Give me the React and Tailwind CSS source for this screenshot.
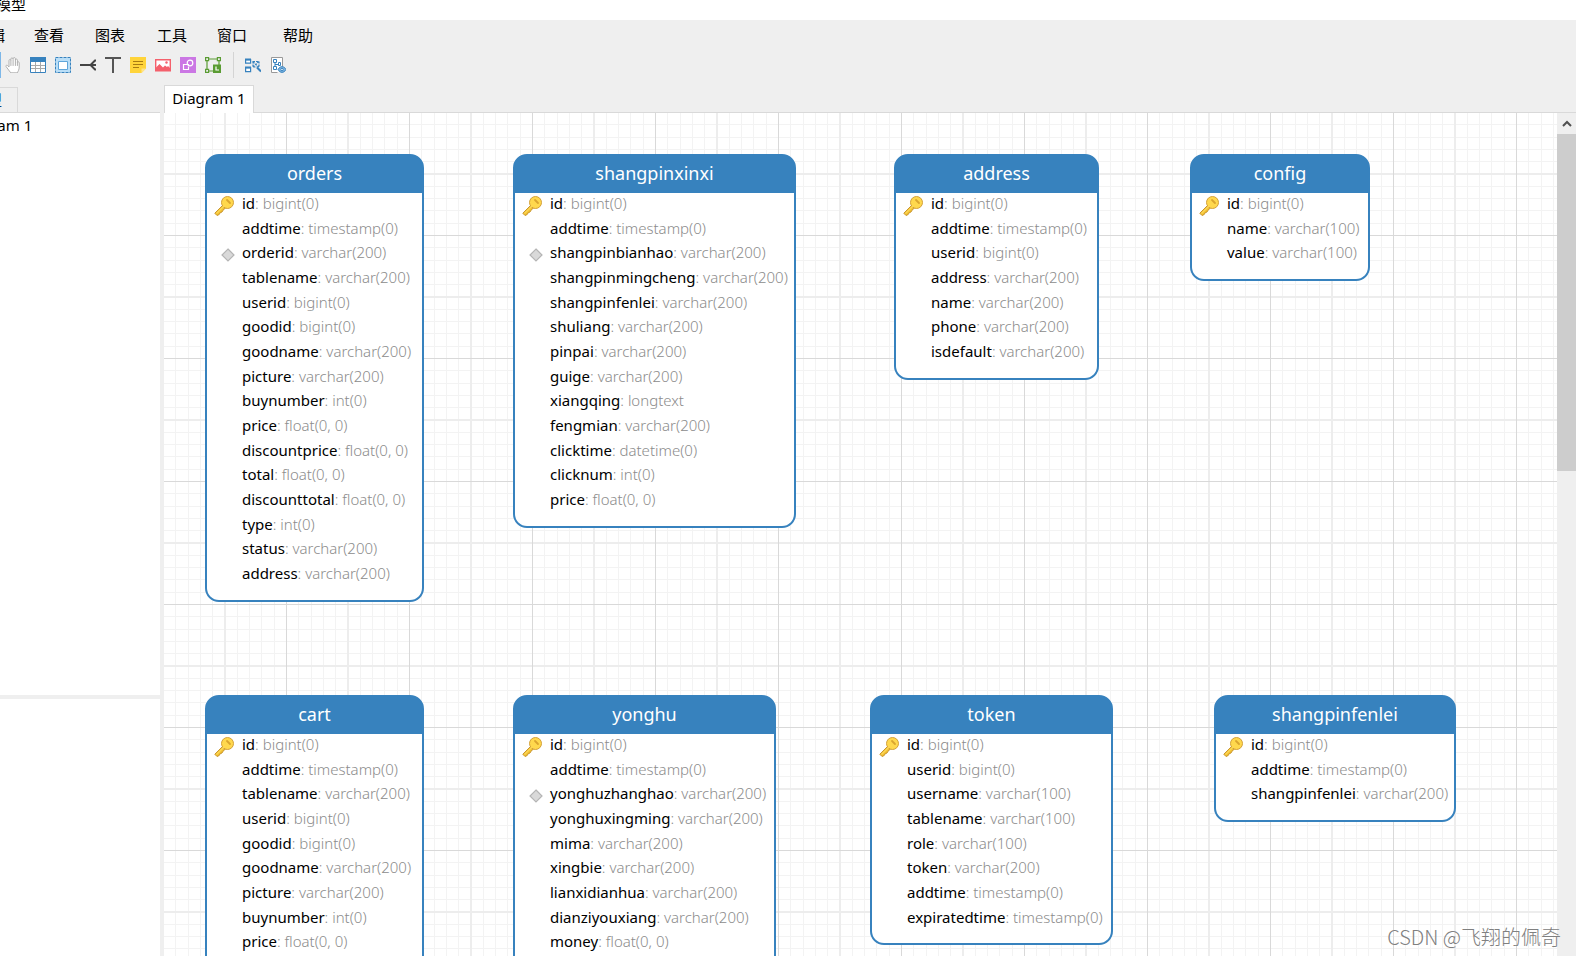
const C = 'bigint(0)', V = 'varchar(200)', W = 'varchar(100)', T = 'timestamp(0)', F = 'float(0, 0)', I = 'int(0)';

const tables = [
  { name: 'orders', x: 41, y: 41, w: 219, unique: 'orderid', cols: [['id', C], ['addtime', T], ['orderid', V], ['tablename', V], ['userid', C], ['goodid', C], ['goodname', V], ['picture', V], ['buynumber', I], ['price', F], ['discountprice', F], ['total', F], ['discounttotal', F], ['type', I], ['status', V], ['address', V]] },
  { name: 'shangpinxinxi', x: 349, y: 41, w: 283, unique: 'shangpinbianhao', cols: [['id', C], ['addtime', T], ['shangpinbianhao', V], ['shangpinmingcheng', V], ['shangpinfenlei', V], ['shuliang', V], ['pinpai', V], ['guige', V], ['xiangqing', 'longtext'], ['fengmian', V], ['clicktime', 'datetime(0)'], ['clicknum', I], ['price', F]] },
  { name: 'address', x: 730, y: 41, w: 205, cols: [['id', C], ['addtime', T], ['userid', C], ['address', V], ['name', V], ['phone', V], ['isdefault', V]] },
  { name: 'config', x: 1026, y: 41, w: 180, cols: [['id', C], ['name', W], ['value', W]] },
  { name: 'cart', x: 41, y: 582, w: 219, cols: [['id', C], ['addtime', T], ['tablename', V], ['userid', C], ['goodid', C], ['goodname', V], ['picture', V], ['buynumber', I], ['price', F]] },
  { name: 'yonghu', x: 349, y: 582, w: 263, unique: 'yonghuzhanghao', cols: [['id', C], ['addtime', T], ['yonghuzhanghao', V], ['yonghuxingming', V], ['mima', V], ['xingbie', V], ['lianxidianhua', V], ['dianziyouxiang', V], ['money', F]] },
  { name: 'token', x: 706, y: 582, w: 243, cols: [['id', C], ['userid', C], ['username', W], ['tablename', W], ['role', W], ['token', V], ['addtime', T], ['expiratedtime', T]] },
  { name: 'shangpinfenlei', x: 1050, y: 582, w: 242, cols: [['id', C], ['addtime', T], ['shangpinfenlei', V]] },
];

function KeyIcon() {
  return (
    <svg width="20" height="20" viewBox="0 0 20 20" aria-hidden="true">
      <path d="M8.500 9.500.8 17.200 3 19.500l2.200-1 1-1.800 1.800-.7 1-1.800 3-2.700z" fill="#f3c02f" stroke="#c9962e" />
      <circle cx="13.500" cy="6.500" r="6" fill="#ffd84d" stroke="#d3a039" />
      <path d="m2.500 17.500 7.500-7.500" stroke="#fbd75a" strokeWidth="1.200" />
      <path d="m13 4 3 3" stroke="#dba52f" strokeWidth="1.800" strokeLinecap="round" />
    </svg>
  );
}

function UniqueIcon() {
  return (
    <svg width="14" height="14" viewBox="0 0 14 14" aria-hidden="true">
      <path d="m7 1 6 6-6 6-6-6z" fill="#d9d9d9" stroke="#b5b5b5" strokeWidth="1.200" />
    </svg>
  );
}

function Entity({ table }) {
  return (
    <section
      className="absolute rounded-[14px] border-2 border-[#3782be] bg-[#3782be]"
      style={{ left: table.x, top: table.y, width: table.w }}
    >
      <h2 className="flex h-[37px] items-center justify-center pb-0.5 text-[18px] text-white">{table.name}</h2>
      <ul className="rounded-b-[12px] bg-white pb-3">
        {table.cols.map(([name, type], i) => (
          <li
            key={name}
            className={`flex items-center whitespace-nowrap pb-1 text-[15px] ${i % 3 === 1 ? 'h-[24px]' : 'h-[25px]'}`}
          >
            <span className="flex w-[35px] shrink-0 items-center justify-center pr-0.5 pt-1">
              {i === 0 && <KeyIcon />}
              {name === table.unique && <span className="pl-2"><UniqueIcon /></span>}
            </span>
            <span>{name}</span>
            <span className="whitespace-pre font-light text-[#8c8c8c]">: {type}</span>
          </li>
        ))}
      </ul>
    </section>
  );
}

const minor = [12, 25, 37, 49, 74, 86, 98, 111];

function Grid() {
  return (
    <svg className="absolute inset-0 size-full" aria-hidden="true">
      <defs>
        <pattern id="grid" x="-1" y="-1" width="123" height="123" patternUnits="userSpaceOnUse" shapeRendering="crispEdges">
          {minor.map((p) => (
            <path key={p} d={`M${p} 0h1v123h-1zM0 ${p}h123v1H0z`} fill="#f3f3f3" />
          ))}
          <path d="M61 0h2v123h-2zM0 61h123v2H0z" fill="#ededed" />
          <path d="M0 0h1v123H0zM0 0h123v1H0z" fill="#d9d9d9" />
        </pattern>
      </defs>
      <rect width="100%" height="100%" fill="url(#grid)" />
    </svg>
  );
}

const tools = [
  ['Hand', <g key="i" strokeLinejoin="round" strokeLinecap="round"><path d="M5.500 15.500 1 9.500c-.4-1.300 1-1.800 2-.5l1 1V3.500c0-1.300 1.800-1.300 1.900 0V2c0-1.500 2.100-1.500 2.200 0v-.3c.1-1.500 2.200-1.500 2.300 0V3c.2-1.300 2-1.200 2 .1v2.400c.3-1 1.800-.9 1.800.3V10c0 3-1.200 4-1.700 5.500z" fill="#fff" stroke="#b0b0b0" /><path d="M5.900 4v4.500M8.100 2.500v6M10.400 3v5.500M12.400 5.500v3" fill="none" stroke="#b0b0b0" /></g>],
  ['Table', <g key="i"><path d="M.5.5h15v15H.5z" fill="#fff" stroke="#3782be" /><path d="M0 0h16v5H0z" fill="#3782be" /><path d="M5.500 5v10M10.500 5v10M1 8.500h14M1 11.500h14" stroke="#a9a9a9" /></g>],
  ['Layer', <g key="i"><path d="M.5.5h15v15H.5z" fill="#b9def7" stroke="#3782be" strokeDasharray="3 1" /><path d="M3.500 4.500h9v8h-9z" fill="#fff" stroke="#5fa5da" /></g>],
  ['Relation', <path key="i" d="M0 8h16M16 3.500h-1L10.500 8l4.500 4.500h1" fill="none" stroke="#444" strokeWidth="2" />],
  ['Label', <path key="i" d="M0 1h16M8 1v15" stroke="#555" strokeWidth="2" />],
  ['Note', <g key="i"><path d="M0 0h16v11.500L11.500 16H0z" fill="#ffd43a" /><path d="M16 11.500h-4.500V16z" fill="#ffe48a" /><path d="M3 4.500h10M3 7.500h10M3 10.500h6" stroke="#a87b12" /></g>],
  ['Image', <g key="i"><path d="M.7 2.700h14.600v11H.7z" fill="#fff" stroke="#f4606c" strokeWidth="1.400" /><path d="M1 10.500 4.500 7 8 10.500l2-2 2 1.500 1-1 2 2V14H1z" fill="#f4606c" /><circle cx="11.500" cy="5.500" r="1.200" fill="#f4606c" /></g>],
  ['Shape', <g key="i"><path d="M0 0h16v16H0z" fill="#cb77e4" /><g fill="none" stroke="#fff" strokeWidth="1.200"><path d="M7 7.500H3.500v5h5v-3" /><circle cx="10" cy="6" r="2.800" /><path d="M7 7.500h1.500V9" /></g></g>],
  ['Layout', <g key="i" fill="none" stroke="#5a9c33" strokeWidth="1.200"><path d="M2 2v12h6M2 2h12v6" /><path d="M.6.6h3v3h-3zM12.400.6h3v3h-3zM.6 12.400h3v3h-3z" fill="#efefef" /><path d="M8 7.500h8V16H8z" fill="#5a9c33" stroke="none" /><path d="M11 9.500V13h3" stroke="#fff" /></g>],
];

const viewTools = [
  ['Auto layout', <g key="i" fill="none" stroke="#3782be" strokeWidth="1.200"><path d="M.6 2.600h5v3.500h-5zM.6 10.600h5v4h-5z" fill="#fff" /><path d="M0 2.500h6M0 10.500h6" strokeWidth="2" /><path d="M8 4.500h6v5.500H8zM8 10l6-6M8 5l6 5" strokeDasharray="2 1" /><path d="m12 10.500 4 4" strokeWidth="2" /></g>],
  ['Preview', <g key="i" fill="none" stroke="#3782be"><path d="M7.500 15.500h-6V.5h11v9" fill="#fff" stroke="#999" /><path d="M3.500 2.500h3v3h-3zM3.500 9.500h3v3h-3zM8.500 5.500h2v3h-2zM5 5.500v4M5 7.500h3" /><path d="M8 12.500c2-3.800 6-3.800 8 0-2 3.800-6 3.800-8 0z" fill="#7db4e0" /><circle cx="12" cy="12.500" r="1.200" fill="#fff" /></g>],
];

function Tool({ label, children }) {
  return (
    <button type="button" aria-label={label} className="flex size-[25px] items-center justify-center">
      <svg width="16" height="16" viewBox="0 0 16 16" aria-hidden="true">{children}</svg>
    </button>
  );
}

export default function App() {
  return (
    <div className="relative flex h-screen flex-col overflow-hidden bg-[#efefef] font-['Noto_Sans','Noto_Sans_CJK_SC',sans-serif] text-black">
      <header className="shrink-0">
        <div className="flex h-5 items-center overflow-hidden bg-white">
          <span className="-ml-1 pb-3 text-[15px] leading-5">模型</span>
        </div>
        <nav className="flex h-[30px] items-center text-[15px]">
          <button type="button" className="-ml-[10px] mr-[29px]">辑</button>
          <button type="button" className="w-[61px] text-left">查看</button>
          <button type="button" className="w-[62px] text-left">图表</button>
          <button type="button" className="w-[60px] text-left">工具</button>
          <button type="button" className="w-[66px] text-left">窗口</button>
          <button type="button">帮助</button>
        </nav>
        <div className="flex h-[30px] items-center">
          <span className="-mr-px h-[26px] w-px bg-[#7db7e8]" />
          {tools.map(([label, art]) => <Tool key={label} label={label}>{art}</Tool>)}
          <span className="ml-2 mr-[6px] h-[26px] w-px bg-[#d4d4d4]" />
          {viewTools.map(([label, art]) => <Tool key={label} label={label}>{art}</Tool>)}
        </div>
      </header>
      <div className="flex min-h-0 flex-1">
        <aside className="flex w-40 shrink-0 flex-col">
          <div className="flex h-[33px] items-end border-b border-[#d9d9d9]">
            <button type="button" className="flex h-[25px] w-[18px] items-center overflow-hidden border-r border-t border-[#d9d9d9] text-[15px] text-[#0a3d7c]">
              <span className="-ml-[13px]">型</span>
            </button>
          </div>
          <div className="h-[582px] shrink-0 overflow-hidden bg-white pt-px text-[15px]">
            <span className="-ml-[41px]">Diagram 1</span>
          </div>
          <div className="h-1 shrink-0" />
          <div className="flex-1 bg-white" />
        </aside>
        <main className="ml-1 flex min-w-0 flex-1 flex-col">
          <div className="flex h-[33px] shrink-0 items-end border-b border-[#d9d9d9]">
            <button type="button" className="-mb-px h-7 w-[90px] border border-b-0 border-[#d9d9d9] bg-white pb-0.5 text-[15px]">Diagram 1</button>
          </div>
          <div className="flex min-h-0 flex-1">
            <div className="relative min-w-0 flex-1 overflow-hidden bg-white">
              <Grid />
              {tables.map((t) => <Entity key={t.name} table={t} />)}
            </div>
            <div className="flex w-[19px] flex-col">
              <button type="button" aria-label="Scroll up" className="flex h-[21px] items-center justify-center">
                <svg width="10" height="7" viewBox="0 0 10 7" aria-hidden="true"><path d="m1 6 4-4 4 4" fill="none" stroke="#505050" strokeWidth="2" /></svg>
              </button>
              <div className="h-[337px] bg-[#cdcdcd]" />
            </div>
          </div>
        </main>
      </div>
      <div className="absolute bottom-1 right-[15px] font-['Noto_Sans_CJK_SC',sans-serif] text-[20px] font-light text-[#808080]">CSDN @飞翔的佩奇</div>
    </div>
  );
}
